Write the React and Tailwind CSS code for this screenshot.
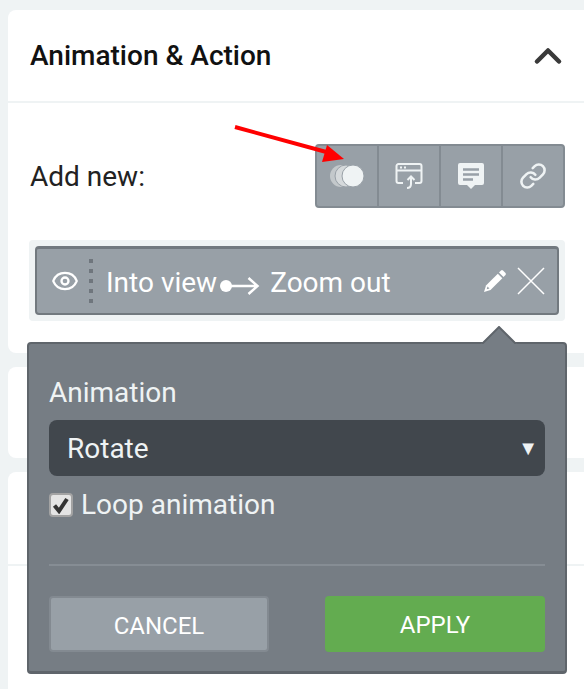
import { ChevronUp, Eye, Link } from "lucide-react";

const font = { fontFamily: "Roboto, sans-serif" };

const AnimIcon = () => (
  <svg width="36" height="24" viewBox="0 0 36 24">
    <circle cx="12" cy="12" r="11" fill="#c3c8cb" />
    <circle cx="17" cy="12" r="11" fill="#d5d9db" stroke="#98a0a7" strokeWidth="1" />
    <circle cx="24" cy="12" r="11" fill="#eff3f4" stroke="#98a0a7" strokeWidth="1" />
  </svg>
);

const PopupIcon = () => (
  <svg width="28" height="28" viewBox="0 0 28 28" fill="none" stroke="#eff3f4" strokeWidth="2">
    <path d="M8 21H3.500a2 2 0 0 1-2-2V4a2 2 0 0 1 2-2h21a2 2 0 0 1 2 2v15a2 2 0 0 1-2 2H20" />
    <path d="M2 8.500h24" />
    <path d="M5 5.500h2M9 5.500h2" />
    <path d="M12 26c3 0 4-2 4-4v-7M12.500 18l3.500-3.500 3.500 3.500" />
  </svg>
);

const CommentIcon = () => (
  <svg width="28" height="28" viewBox="0 0 28 28">
    <path fill="#eff3f4" d="M3 1h22a2 2 0 0 1 2 2v18a2 2 0 0 1-2 2h-7l-4 4-4-4H3a2 2 0 0 1-2-2V3a2 2 0 0 1 2-2z" />
    <path stroke="#98a0a7" strokeWidth="2.500" d="M6 7.500h16M6 12.500h16M6 17.500h10" />
  </svg>
);

const ArrowConnector = () => (
  <svg width="43" height="20" viewBox="0 0 43 20" fill="none" className="mt-[10px] shrink-0">
    <circle cx="9" cy="10" r="6" fill="#fff" />
    <path d="M9 10h31M31.500 2l9 8-9 8" stroke="#fff" strokeWidth="2.500" />
  </svg>
);

const PencilIcon = () => (
  <svg width="24" height="24" viewBox="0 0 24 24" className="mr-[10px] ml-auto shrink-0">
    <path fill="#fff" d="M18 1.500a1.500 1.500 0 0 1 2 0l2.500 2.500a1.500 1.500 0 0 1 0 2L20.500 8 16 3.500z" />
    <path fill="#fff" d="M14.800 4.700l4.500 4.500L7.500 21 1 23l2-6.500z" />
    <path fill="#98a0a7" d="M4.500 17.500l2 2-2.800.8z" />
  </svg>
);

const CloseIcon = () => (
  <svg width="28" height="28" viewBox="0 0 28 28" stroke="#fff" strokeWidth="1.500" className="mr-[12px] shrink-0">
    <path d="M1 1l26 26M27 1 1 27" />
  </svg>
);

export default function App() {
  return (
    <div style={font} className="relative h-[689px] w-[584px] overflow-hidden bg-[#eff3f4] pt-[10px] pl-[8px]">
      <section className="h-[343px] rounded-l-lg bg-white">
        <div className="flex h-[93px] items-center justify-between border-b-2 border-[#eff3f4] pr-[14px] pl-[22px]">
          <h2 className="mt-[1px] text-[28px] font-medium text-[#111]">Animation &amp; Action</h2>
          <ChevronUp size={44} strokeWidth={2.5} className="text-[#3a3a3a]" />
        </div>
        <div className="flex items-center justify-between pt-[41px] pr-[19px] pl-[22px]">
          <span className="mt-[2px] text-[28px] text-[#222]">Add new:</span>
          <div className="flex h-[64px] w-[250px] rounded border-2 border-[#838b92] bg-[#98a0a7]">
            <div className="flex flex-1 items-center justify-center border-r-2 border-[#838b92]"><AnimIcon /></div>
            <div className="flex flex-1 items-center justify-center border-r-2 border-[#838b92]"><PopupIcon /></div>
            <div className="flex flex-1 items-center justify-center border-r-2 border-[#838b92]"><CommentIcon /></div>
            <div className="flex flex-1 items-center justify-center"><Link size={28} strokeWidth={2.2} className="text-[#eff3f4]" /></div>
          </div>
        </div>
        <div className="mt-[32px] mr-[19px] ml-[21px] rounded bg-[#eff3f4] p-[6px]">
          <div className="flex h-[69px] items-center rounded border-2 border-t-[3px] border-[#72797f] bg-[#98a0a7] text-white">
            <Eye size={28} strokeWidth={2} className="ml-[14px]" />
            <div className="mr-[13px] ml-[10px] flex flex-col gap-[6px]">
              <i className="h-[4px] w-[4px] bg-[#6f767d]" />
              <i className="h-[4px] w-[4px] bg-[#6f767d]" />
              <i className="h-[4px] w-[4px] bg-[#6f767d]" />
              <i className="h-[4px] w-[4px] bg-[#6f767d]" />
              <i className="h-[4px] w-[4px] bg-[#6f767d]" />
            </div>
            <span className="mt-[3px] text-[28px]">Into view</span>
            <ArrowConnector />
            <span className="mt-[3px] ml-[10px] text-[28px]">Zoom out</span>
            <PencilIcon />
            <CloseIcon />
          </div>
        </div>
      </section>
      <section className="mt-[14px] h-[91px] rounded-l-lg bg-white" />
      <section className="mt-[14px] h-[230px] rounded-l-lg bg-white">
        <div className="h-[94px] border-b-2 border-[#eff3f4]" />
      </section>

      <div className="absolute top-[342px] left-[27px] h-[332px] w-[540px] rounded border-2 border-b-[3px] border-[#5f656b] bg-[#767d84] px-[20px] pt-[32px] text-[#eff3f4]">
        <svg width="36" height="18" viewBox="0 0 36 18" className="absolute -top-[18px] left-[452px]">
          <path d="M0 18 18 1l18 17z" fill="#767d84" />
          <path d="M1 18 18 1l17 17" fill="none" stroke="#5f656b" strokeWidth="2" />
        </svg>
        <label className="block text-[28px] leading-[34px]">Animation</label>
        <div className="mt-[10px] flex h-[56px] items-center justify-between rounded-lg bg-[#41474d] pr-[7px] pl-[18px]">
          <span className="mt-[1px] text-[28px]">Rotate</span>
          <span className="text-[20px]">▼</span>
        </div>
        <div className="mt-[12px] flex items-center">
          <span className="flex h-[24px] w-[24px] items-center justify-center rounded border-2 border-[#a3a3a3] bg-[#e4e4e4]">
            <svg width="18" height="18" viewBox="0 0 18 18" fill="none"><path d="M2.500 9.500l4.500 5.500 8-12" stroke="#333" strokeWidth="4" /></svg>
          </span>
          <span className="ml-[8px] text-[28px] leading-[34px]">Loop animation</span>
        </div>
        <div className="mt-[42px] h-[2px] w-[496px] bg-[#868d94]" />
        <div className="mt-[30px] flex w-[496px] justify-between">
          <button className="h-[56px] w-[220px] rounded border-2 border-[#838a91] bg-[#98a0a7] pt-[3px] text-[24px] text-white">CANCEL</button>
          <button className="h-[56px] w-[220px] rounded bg-[#63ac50] pt-[1px] text-[24px] text-white">APPLY</button>
        </div>
      </div>

      <svg width="120" height="44" viewBox="0 0 120 44" className="absolute top-[122px] left-[232px]">
        <path d="M3 5 98 31" stroke="#f00" strokeWidth="4" />
        <path d="M95 23 112 37 90 40z" fill="#f00" />
      </svg>
    </div>
  );
}
